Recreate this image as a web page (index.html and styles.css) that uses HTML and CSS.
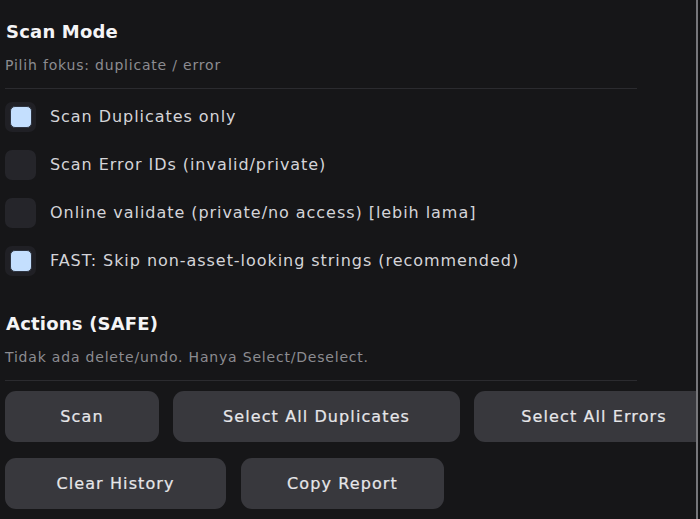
FILE: index.html
```html
<!DOCTYPE html>
<html lang="id">
<head>
<meta charset="utf-8">
<link rel="stylesheet" href="styles.css">
</head>
<body>
<div class="frame">
  <section class="section">
    <h2 class="title">Scan Mode</h2>
    <p class="sub">Pilih fokus: duplicate / error</p>
    <hr class="divider">
    <ul class="options">
      <li class="option"><span class="box checked"><span class="tick"></span></span><span class="label">Scan Duplicates only</span></li>
      <li class="option"><span class="box"></span><span class="label">Scan Error IDs (invalid/private)</span></li>
      <li class="option"><span class="box"></span><span class="label">Online validate (private/no access) [lebih lama]</span></li>
      <li class="option"><span class="box checked"><span class="tick"></span></span><span class="label">FAST: Skip non-asset-looking strings (recommended)</span></li>
    </ul>
  </section>
  <section class="section actions">
    <h2 class="title">Actions (SAFE)</h2>
    <p class="sub">Tidak ada delete/undo. Hanya Select/Deselect.</p>
    <hr class="divider">
    <div class="btn-row">
      <button class="btn w-scan">Scan</button>
      <button class="btn w-dup">Select All Duplicates</button>
      <button class="btn w-err">Select All Errors</button>
    </div>
    <div class="btn-row">
      <button class="btn w-clear">Clear History</button>
      <button class="btn w-copy">Copy Report</button>
    </div>
  </section>
</div>
</body>
</html>
```

FILE: styles.css
```css
html, body {
  margin: 0;
  padding: 0;
  background: #121214;
  height: 519px;
  overflow: hidden;
}
body {
  font-family: "DejaVu Sans", sans-serif;
  color: #d6d6da;
}
.frame {
  width: 691px;
  height: 519px;
  padding-left: 5px;
  background: #161618;
  border-right: 2px solid #76767a;
  overflow: hidden;
  box-sizing: content-box;
}
.section {
  width: 632px;
}
.title {
  margin: 0;
  padding-top: 20px;
  font-size: 18px;
  font-weight: 700;
  letter-spacing: 0.2px;
  color: #f4f4f6;
  line-height: 24px;
  padding-left: 1px;
}
.sub {
  margin: 12px 0 0;
  font-size: 14px;
  letter-spacing: 0.8px;
  line-height: 18px;
  color: #8c8c91;
}
.divider {
  margin: 14px 0 0;
  border: 0;
  height: 1px;
  background: #2b2b2f;
}
.options {
  list-style: none;
  margin: 13px 0 0;
  padding: 0;
  display: flex;
  flex-direction: column;
  gap: 18px;
}
.option {
  display: flex;
  align-items: center;
  gap: 14px;
  height: 30px;
}
.box {
  width: 31px;
  height: 30px;
  border-radius: 7px;
  background: #25252a;
  display: flex;
  align-items: center;
  justify-content: center;
  flex: none;
}
.box.checked {
  background: #202025;
}
.tick {
  width: 20px;
  height: 20px;
  border-radius: 5px;
  background: #c4dffe;
  border: 1px solid #2e3440;
}
.label {
  font-size: 16px;
  letter-spacing: 0.95px;
  line-height: 20px;
  color: #d4d4d8;
}
.actions .title {
  padding-top: 36px;
}
.btn-row {
  display: flex;
  gap: 14px;
  margin-top: 10px;
}
.btn-row + .btn-row {
  margin-top: 16px;
}
.btn {
  flex: none;
  height: 51px;
  border: 0;
  border-radius: 11px;
  background: #38383d;
  color: #e6e6e9;
  font-family: inherit;
  font-size: 16px;
  font-weight: 400;
  letter-spacing: 1.1px;
  -webkit-text-stroke: 0.2px #e6e6e9;
  padding: 0;
}
.w-scan { width: 154px; }
.w-dup { width: 287px; }
.w-err { width: 240px; }
.w-clear { width: 221px; }
.w-copy { width: 203px; margin-left: 1px; }
```
